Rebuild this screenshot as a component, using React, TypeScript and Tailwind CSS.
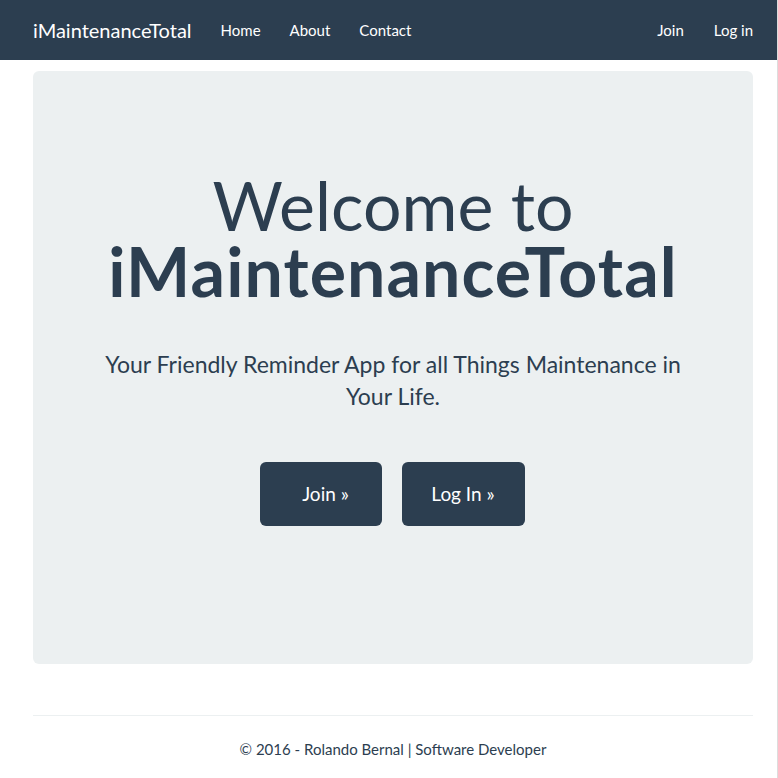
import React from 'react';

const navLinks = ['Home', 'About', 'Contact'];

export default function App() {
  return (
    <div className="flex min-h-[778px] w-[778px] bg-white font-['Lato',sans-serif] text-[#2c3e50]">
      <div className="w-[777px]">
        {/* Navbar */}
        <header className="flex h-[60px] items-center justify-between bg-[#2c3e50] text-white">
          <div className="flex items-center">
            <span className="ml-[33px] text-[20px]">iMaintenanceTotal</span>
            <nav className="ml-[29px] flex items-center gap-[29px] text-[15px]">
              {navLinks.map((l) => (
                <a key={l} className="cursor-pointer">
                  {l}
                </a>
              ))}
            </nav>
          </div>
          <div className="mr-[24px] flex items-center gap-[30px] text-[15px]">
            <a>Join</a>
            <a>Log in</a>
          </div>
        </header>

        {/* Jumbotron */}
        <main className="ml-[33px] mt-[11px] flex h-[593px] w-[720px] flex-col items-center rounded-[6px] bg-[#ecf0f1] px-[60px] pt-[101px] text-center">
          <h1 className="text-[68px] leading-[66px]">
            Welcome to
            <br />
            <b className="font-bold tracking-[1.1px]">iMaintenanceTotal</b>
          </h1>
          <p className="mt-[44px] text-[23px] leading-[32px]">
            Your Friendly Reminder App for all Things Maintenance in Your Life.
          </p>
          <div className="mt-[50px] flex gap-[20px] pr-[2px]">
            <button className="h-[64px] w-[122px] rounded-[6px] bg-[#2c3e50] pl-[10px] text-[19px] text-white">
              Join »
            </button>
            <button className="h-[64px] w-[123px] rounded-[6px] bg-[#2c3e50] text-[19px] text-white">
              Log In »
            </button>
          </div>
        </main>

        {/* Footer */}
        <footer className="ml-[33px] mt-[51px] w-[720px]">
          <hr className="border-t border-[#ecf0f1]" />
          <p className="mt-[22px] text-center text-[15px]">
            © 2016 - Rolando Bernal | Software Developer
          </p>
        </footer>
      </div>
      <div className="w-px bg-[#dddddd]" />
    </div>
  );
}
